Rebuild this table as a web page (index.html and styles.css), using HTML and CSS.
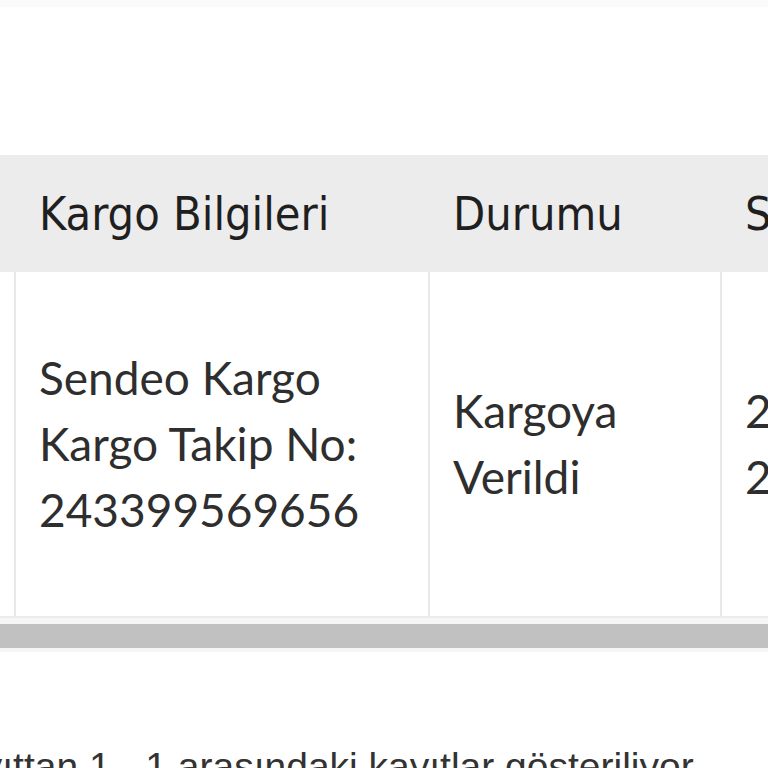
FILE: index.html
```html
<!DOCTYPE html>
<html lang="tr">
<head>
<meta charset="utf-8">
<title>Siparişlerim</title>
<link rel="stylesheet" href="styles.css">
</head>
<body>
<div class="topbar"></div>
<div class="table-wrap">
  <table class="orders">
    <thead>
      <tr>
        <th class="col-prev"></th>
        <th class="col-cargo">Kargo Bilgileri</th>
        <th class="col-status">Durumu</th>
        <th class="col-date">Sipariş Tarihi</th>
      </tr>
    </thead>
    <tbody>
      <tr>
        <td class="col-prev"></td>
        <td class="col-cargo">Sendeo Kargo<br>Kargo Takip No:<br>243399569656</td>
        <td class="col-status">Kargoya<br>Verildi</td>
        <td class="col-date">2024<br>2024</td>
      </tr>
    </tbody>
  </table>
  <div class="scrollbar"><div class="thumb"></div></div>
</div>
<p class="info">1 kayıttan 1 - 1 arasındaki kayıtlar gösteriliyor</p>
</body>
</html>
```
FILE: styles.css
```css
html, body {
  margin: 0;
  padding: 0;
  background: #ffffff;
  overflow: hidden;
  width: 768px;
  height: 768px;
}

.topbar {
  height: 7px;
  background: #fafafa;
}

.table-wrap {
  margin-top: 148px;
  width: 768px;
  overflow: hidden;
}

.orders {
  table-layout: fixed;
  border-collapse: separate;
  border-spacing: 0;
  width: 1206px;
  margin-left: -186px;
}

.orders th,
.orders td {
  box-sizing: border-box;
  text-align: left;
  padding: 0 0 0 23px;
  white-space: nowrap;
  overflow: hidden;
}

.orders th {
  height: 117px;
  background: #ececec;
  border-left: 2px solid #ececec;
  font-family: "DejaVu Sans Condensed", "DejaVu Sans", sans-serif;
  font-stretch: condensed;
  font-weight: normal;
  font-size: 46.5px;
  color: #1f1f1f;
  vertical-align: middle;
}

.orders td {
  height: 346px;
  border-left: 2px solid #e8e8e8;
  border-bottom: 2px solid #ececec;
  font-family: Lato, "Open Sans", sans-serif;
  font-size: 46px;
  line-height: 66px;
  color: #2e2e2e;
  vertical-align: middle;
}

.col-prev { width: 200px; }
.col-cargo { width: 414px; }
.col-status { width: 292px; }
.col-date { width: 300px; }

.scrollbar {
  background: #f6f6f6;
  padding: 6px 0 4px;
}

.thumb {
  height: 24px;
  background: #c1c1c1;
}

.info {
  margin: 93px 0 0 -91px;
  font-family: "Liberation Sans", Arial, sans-serif;
  font-size: 39px;
  color: #333333;
  white-space: nowrap;
}
```
